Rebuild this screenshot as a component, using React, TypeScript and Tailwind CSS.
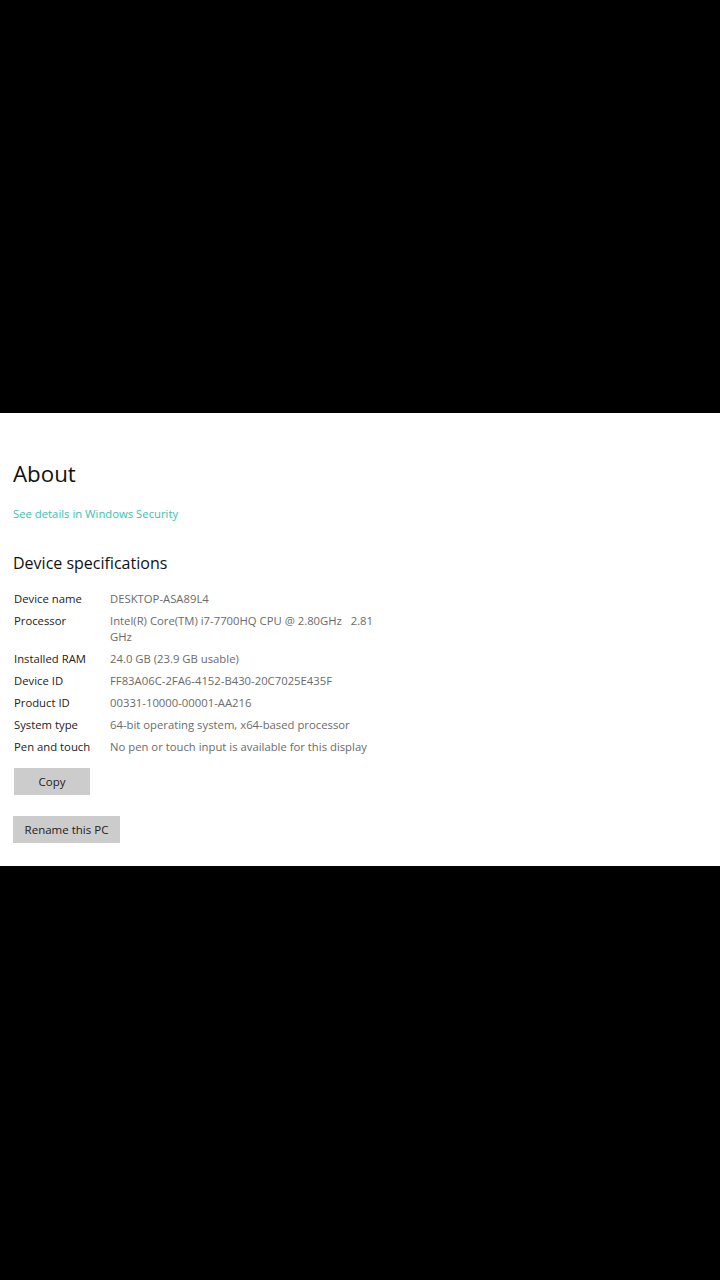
const specs: [string, string][] = [
  ['Device name', 'DESKTOP-ASA89L4'],
  ['Processor', 'Intel(R) Core(TM) i7-7700HQ CPU @ 2.80GHz   2.81 GHz'],
  ['Installed RAM', '24.0 GB (23.9 GB usable)'],
  ['Device ID', 'FF83A06C-2FA6-4152-B430-20C7025E435F'],
  ['Product ID', '00331-10000-00001-AA216'],
  ['System type', '64-bit operating system, x64-based processor'],
  ['Pen and touch', 'No pen or touch input is available for this display'],
];

export default function App() {
  return (
    <div className="w-[720px] h-[1280px] bg-black flex flex-col font-['Open_Sans',sans-serif]">
      <div className="h-[413px]" />
      <div className="bg-white h-[453px] pl-[13px] pt-[45px]">
        <h1 className="text-[22.3px] leading-[32px] text-[#111]">About</h1>
        <a className="block mt-[16px] text-[11.3px] leading-[16px] text-[#3cbfae]">See details in Windows Security</a>
        <h2 className="mt-[29px] text-[16px] leading-[24px] text-[#111]">Device specifications</h2>
        <div className="mt-[13px] flex flex-col">
          {specs.map(([k, v]) => (
            <div key={k} className="flex py-[3px] text-[11.3px] leading-[16px]">
              <div className="w-[97px] pl-[1px] text-[#222]">{k}</div>
              <div className="w-[274px] text-[#6b6b6b] whitespace-pre-wrap">{v}</div>
            </div>
          ))}
        </div>
        <button className="mt-[10px] ml-[1px] w-[76px] h-[27px] bg-[#cccccc] text-[11.5px] text-[#222]">Copy</button>
        <div>
          <button className="mt-[21px] w-[107px] h-[27px] bg-[#cccccc] text-[11.5px] text-[#222]">Rename this PC</button>
        </div>
      </div>
    </div>
  );
}
